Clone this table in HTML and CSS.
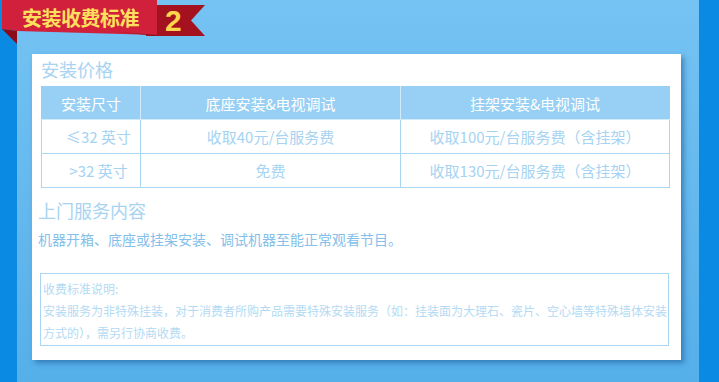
FILE: index.html
```html
<!DOCTYPE html>
<html lang="zh-CN">
<head>
<meta charset="utf-8">
<title>安装收费标准</title>
<link rel="stylesheet" href="styles.css">
</head>
<body>
<div class="page">
  <div class="strip"></div>
  <main class="panel">
    <section class="card">
      <h2 class="sec-title">安装价格</h2>
      <table class="price">
        <colgroup><col class="c1"><col class="c2"><col class="c3"></colgroup>
        <thead>
          <tr><th>安装尺寸</th><th>底座安装&amp;电视调试</th><th>挂架安装&amp;电视调试</th></tr>
        </thead>
        <tbody>
          <tr><td class="size">≤32 英寸</td><td>收取40元/台服务费</td><td>收取100元/台服务费（含挂架）</td></tr>
          <tr><td class="size">&gt;32 英寸</td><td>免费</td><td>收取130元/台服务费（含挂架）</td></tr>
        </tbody>
      </table>
      <h2 class="sec-title sec-title-2">上门服务内容</h2>
      <p class="desc">机器开箱、底座或挂架安装、调试机器至能正常观看节目。</p>
      <div class="note">
        <p>收费标准说明:</p>
        <p>安装服务为非特殊挂装，对于消费者所购产品需要特殊安装服务（如：挂装面为大理石、瓷片、空心墙等特殊墙体安装方式的），需另行协商收费。</p>
      </div>
    </section>
  </main>
  <div class="strip strip-r"></div>
  <div class="banner">
    <svg class="banner-bg" width="210" height="46" viewBox="0 0 210 46" aria-hidden="true">
      <polygon points="146,5 205,5 191,20.5 205,36 146,36" fill="#a3121e"/>
      <polygon points="2,0 157,0 157,35 17,31 2,29" fill="#d0203b"/>
      <polygon points="118,32 157,35 157,36" fill="#8e0f1a"/>
      <polygon points="2,29 17,31 17,44" fill="#8a0c18"/>
    </svg>
    <span class="banner-title">安装收费标准</span>
    <span class="banner-num">2</span>
  </div>
</div>
</body>
</html>
```
FILE: styles.css
```css
html, body {
  margin: 0;
  padding: 0;
}
body {
  font-family: "Noto Sans CJK SC", "Noto Sans", sans-serif;
}
.page {
  position: relative;
  display: flex;
  width: 719px;
  height: 382px;
  overflow: hidden;
}
.strip {
  flex: none;
  width: 17px;
  background: #0b8ae4;
}
.strip-r {
  width: 20px;
}
.panel {
  flex: 1;
  box-sizing: border-box;
  padding: 54px 0 0 15px;
  background: linear-gradient(#75c3f3, #55afe9);
}
.card {
  box-sizing: border-box;
  width: 649px;
  height: 306px;
  padding: 2px 0 0 9px;
  background: #fff;
  box-shadow: 3px 3px 5px rgba(20, 80, 140, 0.5);
}
.sec-title {
  margin: 0;
  font-size: 18px;
  font-weight: normal;
  line-height: 26px;
  color: #a8d4f2;
}
.price {
  margin-top: 4px;
  width: 628px;
  border-collapse: collapse;
  table-layout: fixed;
  font-size: 15px;
}
.price .c1 { width: 99px; }
.price .c2 { width: 260px; }
.price .c3 { width: 269px; }
.price th {
  height: 32px;
  padding: 0;
  border: 1px solid #d2ebfa;
  border-top-color: #97d0f4;
  background: #97d0f4;
  color: #fff;
  font-weight: normal;
}
.price th:first-child { border-left-color: #97d0f4; }
.price th:last-child { border-right-color: #97d0f4; }
.price td {
  height: 33px;
  padding: 0;
  border: 1px solid #a9d6f1;
  text-align: center;
  color: #a6d3f2;
}
.price td.size {
  padding-left: 15px;
}
.sec-title-2 {
  margin: 9px 0 0 -3px;
}
.desc {
  margin: 6px 0 0 -3px;
  font-size: 14px;
  line-height: 20px;
  color: #84c0ea;
}
.note {
  box-sizing: border-box;
  width: 629px;
  height: 73px;
  margin: 24px 0 0 -1px;
  padding: 4px 0 0 2px;
  border: 1px solid #a9d6f1;
  font-size: 12px;
  line-height: 22px;
  color: #b4daf3;
}
.note p {
  margin: 0;
}
.banner {
  position: absolute;
  left: 0;
  top: 0;
  width: 210px;
  height: 46px;
  display: flex;
  align-items: flex-start;
}
.banner-bg {
  position: absolute;
  left: 0;
  top: 0;
}
.banner-title {
  position: relative;
  margin: 4px 0 0 22px;
  font-size: 20px;
  line-height: 28px;
  font-weight: bold;
  color: #fde05d;
  letter-spacing: -0.5px;
}
.banner-num {
  position: relative;
  margin: 3px 0 0 26px;
  font-family: "Liberation Sans", Arial, sans-serif;
  font-size: 30px;
  line-height: 36px;
  font-weight: bold;
  color: #fbd54c;
}
```
